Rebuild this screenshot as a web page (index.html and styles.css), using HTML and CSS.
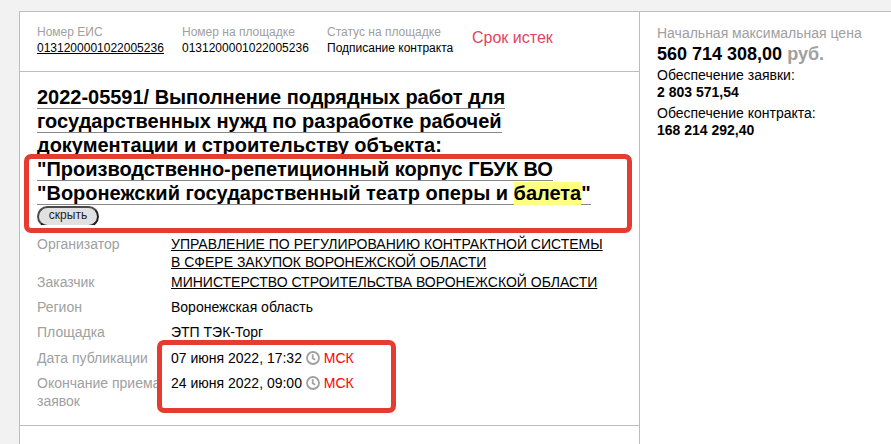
FILE: index.html
```html
<!DOCTYPE html>
<html lang="ru">
  <head>
    <meta charset="UTF-8" />
    <meta name="viewport" content="width=device-width, initial-scale=1.0" />
    <title>Закупка 0131200001022005236</title>
    <link rel="stylesheet" href="styles.css">
  </head>
  <body>
    <div class="tender">
      <div class="tender-main">
        <div class="tender-head">
          <div class="head-item">
            <div class="head-label">Номер ЕИС</div>
            <a href="#" class="eis-link">0131200001022005236</a>
          </div>
          <div class="head-item">
            <div class="head-label">Номер на площадке</div>
            <div>0131200001022005236</div>
          </div>
          <div class="head-item">
            <div class="head-label">Статус на площадке</div>
            <div>Подписание контракта</div>
          </div>
          <div class="expired">Срок истек</div>
        </div>

        <div class="tender-body">
          <h1 class="title">
            <a href="#">2022-05591/ Выполнение подрядных работ для<br>государственных нужд по разработке рабочей<br>документации и строительству объекта:<br>"Производственно-репетиционный корпус ГБУК ВО<br>"Воронежский государственный театр оперы и <mark>балета</mark>"</a>
          </h1>
          <div class="toggle">
            <button class="btn-hide">скрыть</button>
          </div>

          <div class="info">
            <div class="info-row organizer">
              <span class="info-label">Организатор</span>
              <a href="#" class="info-link">УПРАВЛЕНИЕ ПО РЕГУЛИРОВАНИЮ КОНТРАКТНОЙ СИСТЕМЫ<br>В СФЕРЕ ЗАКУПОК ВОРОНЕЖСКОЙ ОБЛАСТИ</a>
            </div>
            <div class="info-row">
              <span class="info-label">Заказчик</span>
              <a href="#" class="info-link">МИНИСТЕРСТВО СТРОИТЕЛЬСТВА ВОРОНЕЖСКОЙ ОБЛАСТИ</a>
            </div>
            <div class="info-row">
              <span class="info-label">Регион</span>
              <span>Воронежская область</span>
            </div>
            <div class="info-row platform">
              <span class="info-label">Площадка</span>
              <span>ЭТП ТЭК-Торг</span>
            </div>
            <div class="info-row">
              <span class="info-label">Дата публикации</span>
              <span class="date">07 июня 2022, 17:32
                <svg class="clock" viewBox="0 0 14 14"><circle cx="7" cy="7" r="6" /><path d="M6.7 3.3v4l2.5 1.5" /></svg>
                <span class="msk">МСК</span></span>
            </div>
            <div class="info-row">
              <span class="info-label">Окончание приема<br>заявок</span>
              <span class="date">24 июня 2022, 09:00
                <svg class="clock" viewBox="0 0 14 14"><circle cx="7" cy="7" r="6" /><path d="M6.7 3.3v4l2.5 1.5" /></svg>
                <span class="msk">МСК</span></span>
            </div>
          </div>
        </div>
      </div>

      <div class="tender-price">
        <div class="price-label">Начальная максимальная цена</div>
        <div class="price">560 714 308,00 <span>руб.</span></div>
        <div class="deposit">
          <div>Обеспечение заявки:</div>
          <b>2 803 571,54</b>
        </div>
        <div class="deposit">
          <div>Обеспечение контракта:</div>
          <b>168 214 292,40</b>
        </div>
      </div>
    </div>

    <div class="frame frame-title"></div>
    <div class="frame frame-dates"></div>
  </body>
</html>
```
FILE: styles.css
```css
* {
  margin: 0;
  padding: 0;
  box-sizing: border-box;
}

body {
  position: relative;
  height: 444px;
  padding: 11px 0 0 19px;
  overflow: hidden;
  background: #f2f2f2;
  font-family: Arial, "Liberation Sans", sans-serif;
  font-size: 14px;
  line-height: 18px;
  color: #000;
}

a {
  color: #000;
  text-decoration: none;
}

.tender {
  display: flex;
  height: 100%;
  background: #fff;
  border-top: 1px solid #bdbdbd;
  border-left: 1px solid #bdbdbd;
}

.tender-main {
  width: 620px;
  border-right: 1px solid #bdbdbd;
}

/* top line with numbers and status */
.tender-head {
  display: flex;
  height: 60px;
  padding: 12px 17px 0;
  border-bottom: 1px solid #bdbdbd;
  font-size: 12px;
  line-height: 16px;
}

.head-item {
  width: 145px;
  white-space: nowrap;
}

.head-label {
  color: #a0a0a0;
}

.eis-link {
  display: inline-block;
  height: 14px;
  border-bottom: 1px solid #000;
}

.expired {
  padding-top: 6px;
  font-size: 16px;
  color: #e04560;
}

.tender-body {
  height: 354px;
  padding: 13px 17px 0;
  border-bottom: 1px solid #bdbdbd;
}

.title {
  font-size: 20px;
  line-height: 24px;
  letter-spacing: -0.02px;
  white-space: nowrap;
}

.title a {
  border-bottom: 1px solid #888;
}

.title mark {
  padding-bottom: 1px;
  background: #ffff80;
  color: #000;
}

.toggle {
  height: 19px;
  margin-top: 1px;
  overflow: hidden;
}

.btn-hide {
  display: block;
  width: 62px;
  height: 21px;
  padding-bottom: 3px;
  border: 2px solid;
  border-color: #4a4a4a #222 #222 #4a4a4a;
  border-radius: 11px;
  background: #e1e1e1;
  font-family: inherit;
  font-size: 12px;
  line-height: 14px;
  color: #222;
}

.info {
  margin-top: 10px;
}

.info-row {
  display: flex;
  margin-bottom: 7px;
  white-space: nowrap;
}

.info-row.organizer {
  margin-bottom: 2px;
}

.info-row.platform {
  margin-bottom: 8px;
}

.info-label {
  flex: 0 0 134px;
  color: #a0a0a0;
}

.info-link {
  text-decoration: underline;
  text-decoration-thickness: 1px;
  text-decoration-skip-ink: none;
  text-underline-offset: 1px;
}

.clock {
  width: 14px;
  height: 14px;
  vertical-align: -2px;
  fill: none;
  stroke: #a0a0a0;
  stroke-width: 1.8;
}

.msk {
  color: #ff0000;
}

.tender-price {
  padding: 12px 17px 0;
}

.price-label {
  color: #a0a0a0;
}

.price {
  margin-bottom: 1px;
  font-size: 18px;
  font-weight: bold;
  line-height: 24px;
}

.price span {
  color: #a0a0a0;
}

.deposit {
  margin-bottom: 4px;
  line-height: 17px;
}

/* red marker frames */
.frame {
  position: absolute;
  border: 5px solid #e53c32;
  border-radius: 7px;
}

.frame-title {
  left: 24px;
  top: 154px;
  width: 608px;
  height: 79px;
}

.frame-dates {
  left: 157px;
  top: 340px;
  width: 239px;
  height: 73px;
}
```
